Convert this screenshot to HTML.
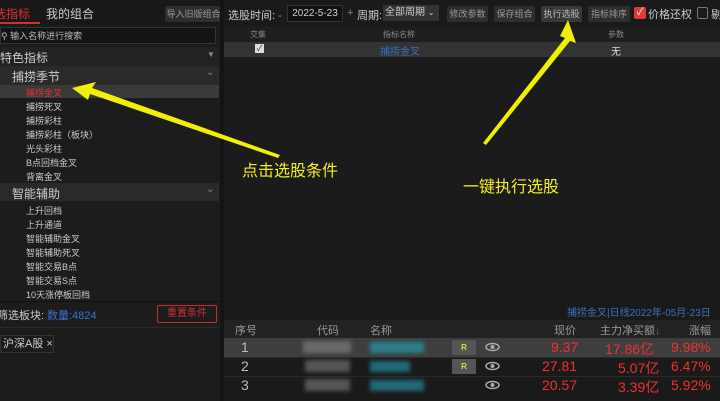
<!DOCTYPE html>
<html><head><meta charset="utf-8"><style>
*{margin:0;padding:0;box-sizing:border-box}
body{width:720px;height:401px;overflow:hidden;background:#1b1b1b;font-family:"Liberation Sans","Noto Sans CJK SC",sans-serif;color:#ccc;position:relative}
.a{position:absolute;white-space:nowrap}
.btn{position:absolute;background:#2e2e2e;color:#999;font-size:9px;text-align:center;line-height:16px;height:16px;border-radius:2px}
.it{position:absolute;left:26px;font-size:9px;color:#ccc}
.r{color:#f03030}
</style></head><body>
<div class="a" style="left:0;top:0;width:220px;height:401px;background:#1c1c1c"></div>
<div class="a" style="left:0;top:0;width:220px;height:25px;background:#181818"></div>
<div class="a r" style="left:-6px;top:5px;font-size:12px;color:#e03030">选指标</div>
<div class="a" style="left:0;top:22px;width:40px;height:2px;background:#d03030"></div>
<div class="a" style="left:46px;top:5px;font-size:12px">我的组合</div>
<div class="btn" style="left:165px;top:6px;width:57px">导入旧版组合</div>
<div class="a" style="left:0;top:27px;width:216px;height:17px;border:1px solid #333;background:#141414"></div>
<div class="a" style="left:1px;top:29px;font-size:9px;color:#bbb">⚲ 输入名称进行搜索</div>
<div class="a" style="left:0;top:47px;width:219px;height:19px;background:#222"></div>
<div class="a" style="left:0;top:49px;font-size:12px">特色指标</div>
<div class="a" style="left:207px;top:50px;font-size:8px;color:#888">▼</div>
<div class="a" style="left:0;top:66px;width:219px;height:19px;background:#2a2a2a"></div>
<div class="a" style="left:12px;top:68px;font-size:12px">捕捞季节</div>
<div class="a" style="left:206px;top:67px;font-size:10px;color:#888">⌄</div>
<div class="a" style="left:0;top:85px;width:219px;height:13px;background:#3a3a3a"></div>
<div class="it" style="top:86px;color:#e03030">捕捞金叉</div>
<div class="it" style="top:100px">捕捞死叉</div>
<div class="it" style="top:114px">捕捞彩柱</div>
<div class="it" style="top:128px">捕捞彩柱（板块）</div>
<div class="it" style="top:142px">光头彩柱</div>
<div class="it" style="top:156px">B点回档金叉</div>
<div class="it" style="top:170px">背离金叉</div>
<div class="a" style="left:0;top:183px;width:219px;height:18px;background:#2a2a2a"></div>
<div class="a" style="left:12px;top:185px;font-size:12px">智能辅助</div>
<div class="a" style="left:206px;top:184px;font-size:10px;color:#888">⌄</div>
<div class="it" style="top:204px">上升回档</div>
<div class="it" style="top:218px">上升通道</div>
<div class="it" style="top:232px">智能辅助金叉</div>
<div class="it" style="top:246px">智能辅助死叉</div>
<div class="it" style="top:260px">智能交易B点</div>
<div class="it" style="top:274px">智能交易S点</div>
<div class="it" style="top:288px">10天涨停板回档</div>
<div class="a" style="left:0;top:301px;width:220px;height:1px;background:#111"></div>
<div class="a" style="left:-3px;top:307px;font-size:11px">筛选板块:</div>
<div class="a" style="left:47px;top:307px;font-size:11px;color:#3a6fd8">数量:4824</div>
<div class="a" style="left:157px;top:305px;width:60px;height:18px;border:1px solid #c03030;border-radius:2px;color:#d03030;font-size:10px;text-align:center;line-height:16px">重置条件</div>
<div class="a" style="left:0;top:327px;width:220px;height:1px;background:#2a2a2a"></div>
<div class="a" style="left:0;top:335px;width:54px;height:18px;border:1px solid #333;font-size:11px;line-height:16px;padding-left:2px">沪深A股 ×</div>
<div class="a" style="left:220px;top:0;width:4px;height:401px;background:#141414"></div>
<div class="a" style="left:224px;top:0;width:496px;height:26px;background:#1a1a1a"></div>
<div class="a" style="left:228px;top:7px;font-size:11px">选股时间: <span style="color:#888">-</span></div>
<div class="a" style="left:287px;top:5px;width:56px;height:17px;background:#111;border:1px solid #333;font-size:10px;line-height:15px;text-align:center">2022-5-23</div>
<div class="a" style="left:347px;top:7px;font-size:11px;color:#888">+</div>
<div class="a" style="left:357px;top:7px;font-size:11px">周期:</div>
<div class="a" style="left:383px;top:5px;width:56px;height:16px;background:#333;font-size:10px;line-height:16px;padding-left:2px">全部周期 <span style="font-size:8px">⌄</span></div>
<div class="btn" style="left:447px;top:6px;width:41px">修改参数</div>
<div class="btn" style="left:494px;top:6px;width:41px">保存组合</div>
<div class="btn" style="left:541px;top:6px;width:41px;background:#383838;color:#bbb">执行选股</div>
<div class="btn" style="left:588px;top:6px;width:42px">指标排序</div>
<div class="a" style="left:634px;top:7px;width:12px;height:12px;background:#e03a3a;border-radius:2px;color:#fff;font-size:10px;line-height:12px;text-align:center">✓</div>
<div class="a" style="left:648px;top:6px;font-size:11px">价格还权</div>
<div class="a" style="left:697px;top:7px;width:11px;height:12px;border:1px solid #777;border-radius:2px"></div>
<div class="a" style="left:711px;top:6px;font-size:11px">剔</div>
<div class="a" style="left:224px;top:27px;width:496px;height:15px;background:#1e1e1e"></div>
<div class="a" style="left:250px;top:29px;font-size:8px;color:#888">交集</div>
<div class="a" style="left:383px;top:29px;font-size:8px;color:#888">指标名称</div>
<div class="a" style="left:608px;top:29px;font-size:8px;color:#888">参数</div>
<div class="a" style="left:224px;top:42px;width:496px;height:15px;background:#333"></div>
<div class="a" style="left:255px;top:44px;width:9px;height:9px;background:#ddd;color:#333;font-size:8px;line-height:9px;text-align:center">✓</div>
<div class="a" style="left:380px;top:43px;font-size:10px;color:#3a70c0">捕捞金叉</div>
<div class="a" style="left:611px;top:43px;font-size:10px;color:#ddd">无</div>
<div class="a" style="left:224px;top:300px;width:496px;height:101px;background:#1a1a1a"></div>
<div class="a" style="left:567px;top:304px;font-size:10px;color:#3a70c0">捕捞金叉|日线2022年-05月-23日</div>
<div class="a" style="left:224px;top:320px;width:496px;height:18px;background:#222"></div>
<div class="a" style="left:235px;top:322px;font-size:11px;color:#999">序号</div>
<div class="a" style="left:317px;top:322px;font-size:11px;color:#999">代码</div>
<div class="a" style="left:370px;top:322px;font-size:11px;color:#999">名称</div>
<div class="a" style="left:554px;top:322px;font-size:11px;color:#999">现价</div>
<div class="a" style="left:600px;top:322px;font-size:11px;color:#999">主力净买额<span style="color:#3a70c0">↓</span></div>
<div class="a" style="left:689px;top:322px;font-size:11px;color:#999">涨幅</div>
<div class="a" style="left:224px;top:338px;width:496px;height:19px;background:#3e3e3e"></div>
<div class="a" style="left:224px;top:357px;width:496px;height:1px;background:#2a2a2a"></div>
<div class="a" style="left:224px;top:376px;width:496px;height:1px;background:#2a2a2a"></div>
<div class="a" style="left:241px;top:339px;font-size:14px;color:#bbb">1</div>
<div class="a" style="left:241px;top:358px;font-size:14px;color:#bbb">2</div>
<div class="a" style="left:241px;top:377px;font-size:14px;color:#bbb">3</div>
<div class="a" style="left:303px;top:341px;width:48px;height:12px;background:#6a6a6a;filter:blur(2px)"></div>
<div class="a" style="left:305px;top:360px;width:45px;height:12px;background:#555;filter:blur(2px)"></div>
<div class="a" style="left:305px;top:379px;width:45px;height:12px;background:#555;filter:blur(2px)"></div>
<div class="a" style="left:370px;top:342px;width:54px;height:11px;background:#2a7f8a;filter:blur(2px)"></div>
<div class="a" style="left:370px;top:361px;width:40px;height:11px;background:#206a78;filter:blur(2px)"></div>
<div class="a" style="left:370px;top:380px;width:54px;height:11px;background:#206a78;filter:blur(2px)"></div>
<div class="a" style="left:452px;top:340px;width:24px;height:15px;background:#555;color:#dd3;font-size:8px;text-align:center;line-height:15px;font-weight:bold">R</div>
<div class="a" style="left:452px;top:359px;width:24px;height:15px;background:#555;color:#dd3;font-size:8px;text-align:center;line-height:15px;font-weight:bold">R</div>
<svg class="a" style="left:485px;top:342px" width="15" height="50"><g fill="none" stroke="#aaa" stroke-width="1.5"><ellipse cx="7.5" cy="5" rx="6.5" ry="3.5"/><ellipse cx="7.5" cy="24" rx="6.5" ry="3.5"/><ellipse cx="7.5" cy="43" rx="6.5" ry="3.5"/></g><g fill="#aaa"><circle cx="7.5" cy="5" r="2"/><circle cx="7.5" cy="24" r="2"/><circle cx="7.5" cy="43" r="2"/></g></svg>
<div class="a r" style="left:551px;top:339px;font-size:14px">9.37</div>
<div class="a r" style="left:542px;top:358px;font-size:14px">27.81</div>
<div class="a r" style="left:542px;top:377px;font-size:14px">20.57</div>
<div class="a r" style="left:605px;top:339px;font-size:14px">17.86亿</div>
<div class="a r" style="left:618px;top:358px;font-size:14px">5.07亿</div>
<div class="a r" style="left:618px;top:377px;font-size:14px">3.39亿</div>
<div class="a r" style="left:671px;top:339px;font-size:14px">9.98%</div>
<div class="a r" style="left:671px;top:358px;font-size:14px">6.47%</div>
<div class="a r" style="left:671px;top:377px;font-size:14px">5.92%</div>
<svg class="a" style="left:0;top:0" width="720" height="401">
<polygon points="72,88 96,82 92,88 280,155 278,158 90,94 88,100" fill="#f0f000"/>
<polygon points="568,20 576,43 570,41 486,145 483,143 565,38 560,36" fill="#f0f000"/>
</svg>
<div class="a" style="left:242px;top:157px;font-size:16px;color:#f0f020">点击选股条件</div>
<div class="a" style="left:463px;top:173px;font-size:16px;color:#f0f020">一键执行选股</div>
</body></html>
